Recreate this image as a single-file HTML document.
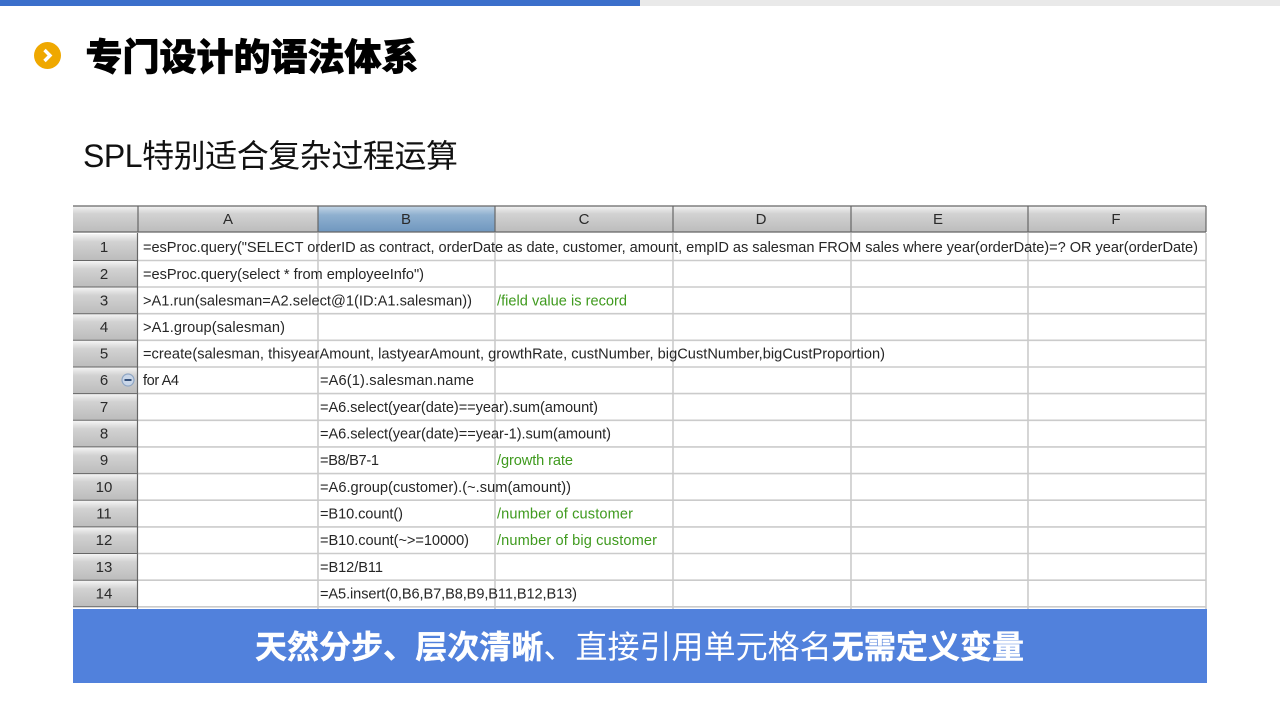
<!DOCTYPE html>
<html lang="zh-CN">
<head>
<meta charset="utf-8">
<title>专门设计的语法体系</title>
<style>
html,body{margin:0;padding:0;background:#fff;}
#s{position:relative;width:1280px;height:720px;overflow:hidden;background:#fff;}
#s svg{position:absolute;left:0;top:0;}
.c{font-family:"Liberation Sans",sans-serif;font-size:14.6px;fill:#262626;}
.g{fill:#3f9a1e;}
.h{font-family:"Liberation Sans",sans-serif;font-size:15px;fill:#2a2a2a;text-anchor:middle;}
.cjk{font-family:"Liberation Sans","Noto Sans CJK SC",sans-serif;}
.soft{filter:blur(.3px);}
</style>
</head>
<body>
<div id="s">
<svg width="1280" height="720" viewBox="0 0 1280 720" xmlns="http://www.w3.org/2000/svg">
<defs>
<linearGradient id="hd" x1="0" y1="0" x2="0" y2="1"><stop offset="0" stop-color="#f4f4f4"/><stop offset=".3" stop-color="#d2d2d2"/><stop offset="1" stop-color="#bcbcbc"/></linearGradient>
<linearGradient id="hb" x1="0" y1="0" x2="0" y2="1"><stop offset="0" stop-color="#c4d6e6"/><stop offset=".35" stop-color="#8fb0cf"/><stop offset="1" stop-color="#6f97bf"/></linearGradient>
</defs>
<rect x="0" y="0" width="640" height="6" fill="#3b6fcb"/>
<rect x="640" y="0" width="640" height="6" fill="#e9e9e9"/>
<circle cx="47.5" cy="55.5" r="13.5" fill="#efa800"/>
<path d="M44.5 50L50 55.5L44.500 61" fill="none" stroke="#fff" stroke-width="3.4"/>
<text class="cjk" x="85.500" y="70" font-size="37" font-weight="900" fill="#000" stroke="#000" stroke-width=".7" textLength="333" lengthAdjust="spacing">专门设计的语法体系</text>
<text class="cjk" x="83" y="167" font-size="32" fill="#111" textLength="375" lengthAdjust="spacing">SPL特别适合复杂过程运算</text>

<!-- grid lines -->
<g stroke="#cbcbcb" stroke-width="1.6" fill="none">
<path d="M138 260.5H1206M138 287H1206M138 313.7H1206M138 340.3H1206M138 367H1206M138 393.6H1206M138 420.3H1206M138 446.9H1206M138 473.6H1206M138 500.2H1206M138 526.9H1206M138 553.5H1206M138 580.2H1206M138 606.8H1206"/>
<path d="M318 233V609M495 233V609M673 233V609M851 233V609M1028 233V609M1206 233V609"/>
</g>

<!-- column headers -->
<rect x="73" y="206" width="1133" height="26" fill="url(#hd)"/>
<rect x="318" y="206" width="177" height="26" fill="url(#hb)"/>
<path d="M73 206H1206M73 232H1206" stroke="#666" stroke-width="1.2"/>
<path d="M138 206V232M318 206V232M495 206V232M673 206V232M851 206V232M1028 206V232M1206 206V232" stroke="#666" stroke-width="1.2"/>
<g class="soft"><text class="h" x="228" y="224">A</text><text class="h" x="406" y="224">B</text><text class="h" x="584" y="224">C</text><text class="h" x="761" y="224">D</text><text class="h" x="938" y="224">E</text><text class="h" x="1116" y="224">F</text></g>

<!-- row headers -->
<g fill="url(#hd)">
<rect x="73" y="234" width="64" height="26"/><rect x="73" y="261" width="64" height="26"/><rect x="73" y="287.5" width="64" height="26"/><rect x="73" y="314" width="64" height="26"/><rect x="73" y="341" width="64" height="26"/><rect x="73" y="367.5" width="64" height="26"/><rect x="73" y="394" width="64" height="26"/><rect x="73" y="421" width="64" height="26"/><rect x="73" y="447.5" width="64" height="26"/><rect x="73" y="474" width="64" height="26"/><rect x="73" y="501" width="64" height="26"/><rect x="73" y="527.5" width="64" height="26"/><rect x="73" y="554" width="64" height="26"/><rect x="73" y="581" width="64" height="26"/>
</g>
<path d="M73 260.5H138M73 287H138M73 313.7H138M73 340.3H138M73 367H138M73 393.6H138M73 420.3H138M73 446.9H138M73 473.6H138M73 500.2H138M73 526.9H138M73 553.5H138M73 580.2H138M73 606.8H138" stroke="#666" stroke-width="1"/>
<path d="M137.5 233V609" stroke="#666" stroke-width="1.2"/>
<g class="soft">
<text class="h" x="104" y="252">1</text><text class="h" x="104" y="279">2</text><text class="h" x="104" y="305.500">3</text><text class="h" x="104" y="332">4</text><text class="h" x="104" y="358.500">5</text><text class="h" x="104" y="385">6</text><text class="h" x="104" y="412">7</text><text class="h" x="104" y="438.500">8</text><text class="h" x="104" y="465">9</text><text class="h" x="104" y="492">10</text><text class="h" x="104" y="518.500">11</text><text class="h" x="104" y="545">12</text><text class="h" x="104" y="572">13</text><text class="h" x="104" y="598.500">14</text>
</g>
<circle cx="128" cy="380" r="6" fill="#c9d6e8" stroke="#8fa6c4" stroke-width="1.2"/>
<rect x="124.500" y="379" width="7" height="2" fill="#34507a"/>

<!-- cells -->
<g class="soft">
<text class="c" x="143" y="252" textLength="1055" lengthAdjust="spacing">=esProc.query("SELECT orderID as contract, orderDate as date, customer, amount, empID as salesman FROM sales where year(orderDate)=? OR year(orderDate)</text>
<text class="c" x="143" y="279" textLength="281" lengthAdjust="spacing">=esProc.query(select * from employeeInfo")</text>
<text class="c" x="143" y="305.500" textLength="329" lengthAdjust="spacing">&gt;A1.run(salesman=A2.select@1(ID:A1.salesman))</text>
<text class="c g" x="497" y="305.500" textLength="130" lengthAdjust="spacing">/field value is record</text>
<text class="c" x="143" y="332" textLength="142" lengthAdjust="spacing">&gt;A1.group(salesman)</text>
<text class="c" x="143" y="358.500" textLength="742" lengthAdjust="spacing">=create(salesman, thisyearAmount, lastyearAmount, growthRate, custNumber, bigCustNumber,bigCustProportion)</text>
<text class="c" x="143" y="385" textLength="36" lengthAdjust="spacing">for A4</text>
<text class="c" x="320" y="385" textLength="154" lengthAdjust="spacing">=A6(1).salesman.name</text>
<text class="c" x="320" y="412" textLength="278" lengthAdjust="spacing">=A6.select(year(date)==year).sum(amount)</text>
<text class="c" x="320" y="438.500" textLength="291" lengthAdjust="spacing">=A6.select(year(date)==year-1).sum(amount)</text>
<text class="c" x="320" y="465" textLength="59" lengthAdjust="spacing">=B8/B7-1</text>
<text class="c g" x="497" y="465" textLength="76" lengthAdjust="spacing">/growth rate</text>
<text class="c" x="320" y="492" textLength="251" lengthAdjust="spacing">=A6.group(customer).(~.sum(amount))</text>
<text class="c" x="320" y="518.500" textLength="83" lengthAdjust="spacing">=B10.count()</text>
<text class="c g" x="497" y="518.500" textLength="136" lengthAdjust="spacing">/number of customer</text>
<text class="c" x="320" y="545" textLength="149" lengthAdjust="spacing">=B10.count(~&gt;=10000)</text>
<text class="c g" x="497" y="545" textLength="160" lengthAdjust="spacing">/number of big customer</text>
<text class="c" x="320" y="572" textLength="63" lengthAdjust="spacing">=B12/B11</text>
<text class="c" x="320" y="598.500" textLength="257" lengthAdjust="spacing">=A5.insert(0,B6,B7,B8,B9,B11,B12,B13)</text>
</g>

<!-- banner -->
<rect x="73" y="609" width="1134" height="74" fill="#5181dc"/>
<text class="cjk" x="255" y="658" font-size="32" fill="#fff" textLength="769" lengthAdjust="spacing"><tspan font-weight="700" stroke="#fff" stroke-width=".4">天然分步、层次清晰</tspan><tspan>、直接引用单元格名</tspan><tspan font-weight="700" stroke="#fff" stroke-width=".4">无需定义变量</tspan></text>
</svg>
</div>
</body>
</html>
